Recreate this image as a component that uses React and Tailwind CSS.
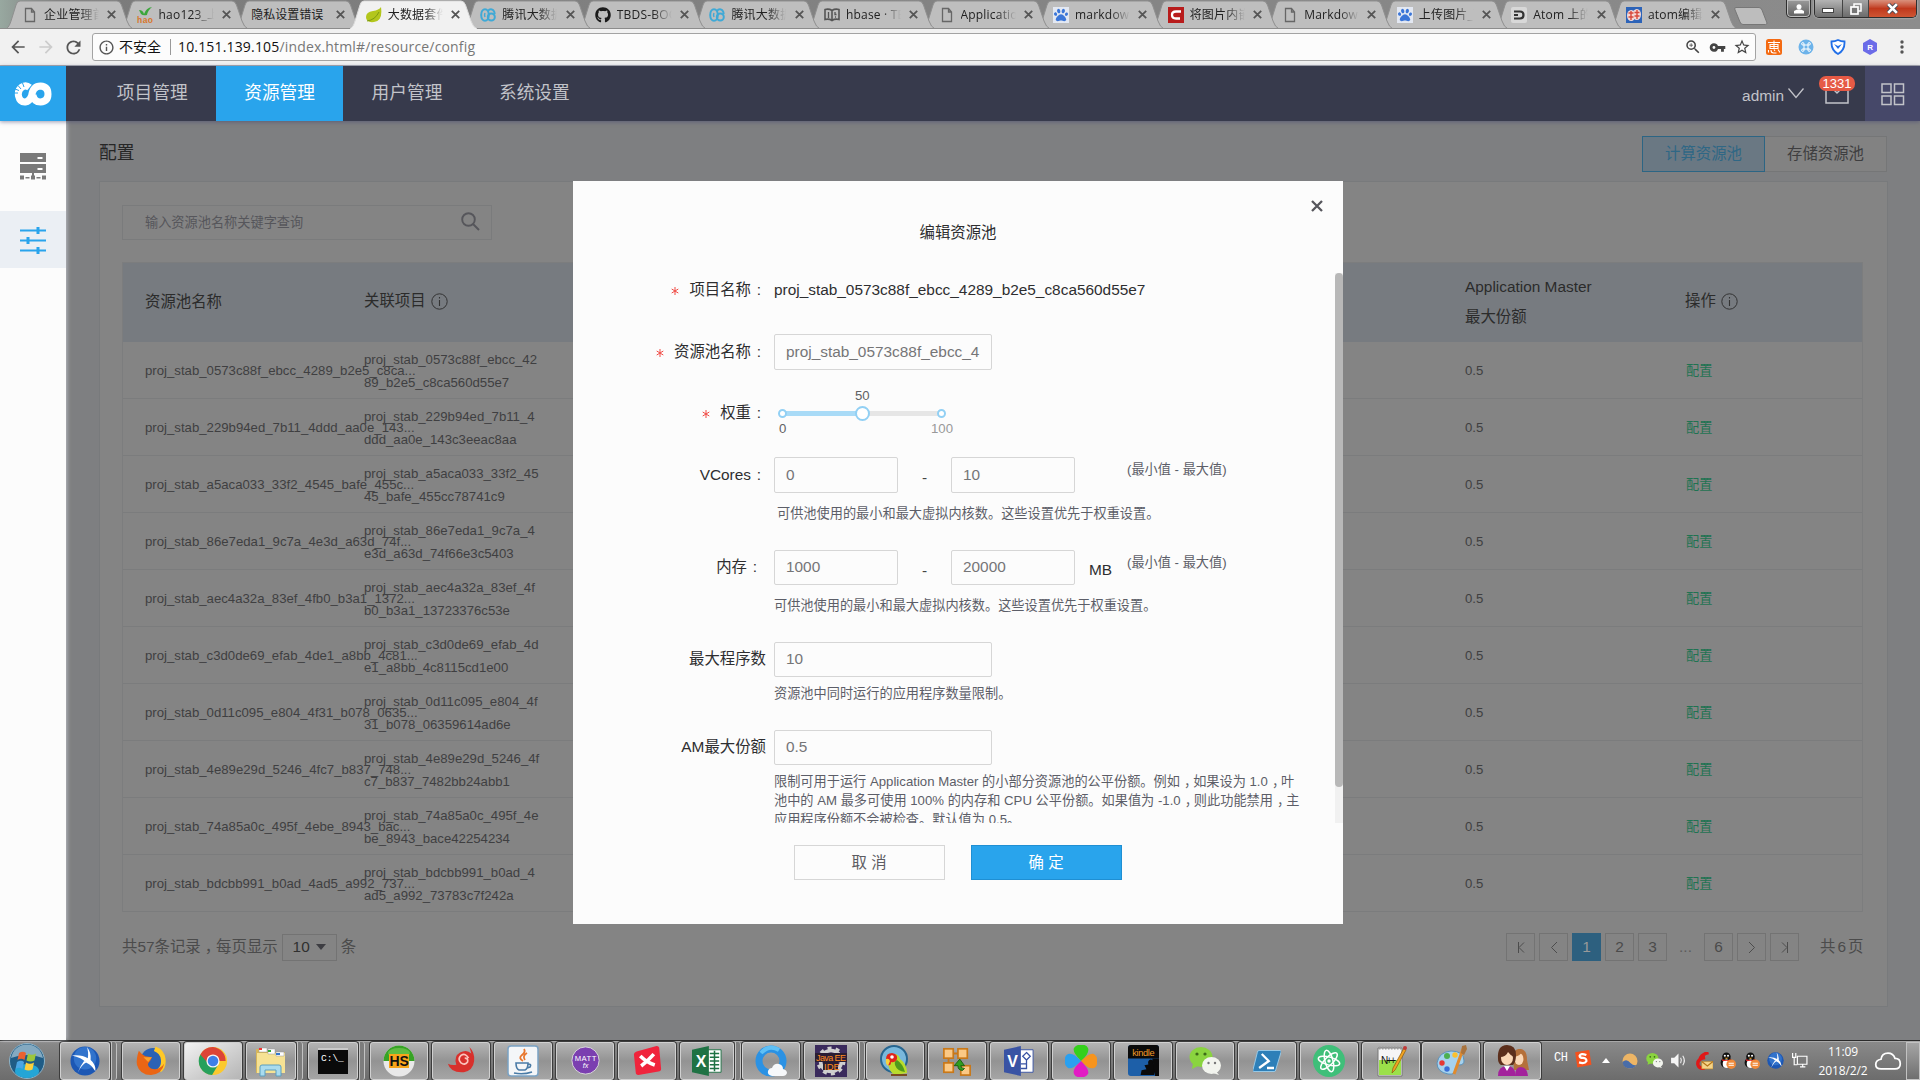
import React from "react";
import { FaGithub, FaPaw } from "react-icons/fa";
import { MdVpnKey, MdStarBorder, MdRefresh, MdArrowBack, MdArrowForward, MdZoomIn, MdInfoOutline } from "react-icons/md";

/* ---------- browser chrome ---------- */

const PageIcon = () => (
  <svg viewBox="0 0 16 16" className="size-4">
    <path d="M3.5 1.5h6l3 3.5v9.500h-9z M9.500 1.500V5h3" fill="none" stroke="#666" strokeWidth="1.3" />
  </svg>
);
const HaoIcon = () => (
  <svg viewBox="0 0 16 16" className="size-4">
    <path d="M2 3q4 0 5 4 2-6 8-7-4 3-5 8-4 1-6-1-1-2-2-4z" fill="#3aa63a" />
    <text x="0" y="15.500" fontSize="8.500" fontWeight="700" fontFamily="Liberation Sans" fill="#d9772b" textLength="16">hao</text>
  </svg>
);
const LeafIcon = () => (
  <svg viewBox="0 0 16 16" className="size-4">
    <path d="M15 0q2 14-7 15Q0 16 0 10q0-5 7-6 6-1 8-4z" fill="#b3c61c" />
    <path d="M1 14Q9 13 13 5" fill="none" stroke="#7d9a10" strokeWidth="1" />
  </svg>
);
const TencentIcon = () => (
  <svg viewBox="0 0 16 16" className="size-4">
    <ellipse cx="5" cy="8" rx="3.800" ry="5.800" fill="none" stroke="#3fa9d6" strokeWidth="2" />
    <circle cx="11.300" cy="10" r="3.500" fill="none" stroke="#3fa9d6" strokeWidth="2" />
    <path d="M8 4q2-3 5-1 2 2 1.500 4" fill="none" stroke="#3fa9d6" strokeWidth="2" />
    <path d="M5 6q-1 2 0 4" fill="none" stroke="#3fa9d6" strokeWidth="1.500" />
  </svg>
);
const BookIcon = () => (
  <svg viewBox="0 0 16 16" className="size-4">
    <path d="M1 2.500q4-1 7 1 3-2 7-1v10q-4-1-7 1-3-2-7-1zM8 3.500v10" fill="none" stroke="#555" strokeWidth="1.600" />
    <path d="M4.500 5v6M11 5v2.500h1.500M11 10h1" fill="none" stroke="#555" strokeWidth="1.300" />
  </svg>
);
const BaiduIcon = () => (
  <div className="flex size-4 items-center justify-center bg-[#e3e8f2]">
    <FaPaw className="size-[14px] text-[#3b76d8]" />
  </div>
);
const CIcon = () => (
  <svg viewBox="0 0 16 16" className="size-4">
    <rect width="16" height="16" fill="#b81c1c" />
    <path d="M13 4.500H8q-4 0-4 3.500t4 3.500h4" fill="none" stroke="#fff" strokeWidth="2.300" />
  </svg>
);
const DIcon = () => (
  <svg viewBox="0 0 16 16" className="size-4">
    <rect width="16" height="16" rx="2" fill="#d8d8d8" />
    <path d="M3 4.500h6q3.500 0 3.500 3.500t-3.500 3.500H3M3 8h4" fill="none" stroke="#333" strokeWidth="2.200" />
  </svg>
);
const JjIcon = () => (
  <svg viewBox="0 0 16 16" className="size-4">
    <rect width="16" height="16" fill="#2c63b8" />
    <ellipse cx="5.200" cy="8.500" rx="4.200" ry="5.500" fill="#f4d9d6" />
    <ellipse cx="10.800" cy="7.500" rx="4.200" ry="5.500" fill="#f4d9d6" />
    <path d="M5 13V4M2.500 6h5M2.500 10h5M11 12V3M8.500 5.500h5M8.500 9h5" stroke="#d8483c" strokeWidth="1.400" />
  </svg>
);

const tabs = [
  { icon: PageIcon, text: "企业管理首页" },
  { icon: HaoIcon, text: "hao123_上网" },
  { icon: null, text: "隐私设置错误" },
  { icon: LeafIcon, text: "大数据套件", active: true },
  { icon: TencentIcon, text: "腾讯大数据" },
  { icon: () => <FaGithub className="size-4 text-[#1b1b1b]" />, text: "TBDS-BOOK" },
  { icon: TencentIcon, text: "腾讯大数据" },
  { icon: BookIcon, text: "hbase · TBDS" },
  { icon: PageIcon, text: "Application" },
  { icon: BaiduIcon, text: "markdown" },
  { icon: CIcon, text: "将图片内嵌" },
  { icon: PageIcon, text: "Markdown" },
  { icon: BaiduIcon, text: "上传图片_百" },
  { icon: DIcon, text: "Atom 上的" },
  { icon: JjIcon, text: "atom编辑器" },
];

function Tab({ tab, z }) {
  const Icon = tab.icon;
  return (
    <div className="relative h-[29px] w-[114.57px] shrink-0" style={{ zIndex: z }}>
      <svg className="absolute left-0 top-0 h-[29px] w-[127px]" viewBox="0 0 127 29">
        <path d="M0 29 C3 27 4 24 5 21 L10 5 Q11 1 14 1 H111 Q114 1 115.500 5 L121 21 Q123 27 127 29Z" fill={tab.active ? "#f1f1f1" : "#bebebe"} stroke={tab.active ? "#dcdcdc" : "#8f8f8f"} />
        {!tab.active && <path d="M0 28.500H127" stroke="#8c8c8c" />}
        {tab.active && <path d="M1 29H126" stroke="#f1f1f1" strokeWidth="2" />}
      </svg>
      <div className="relative flex h-[29px] items-center pl-4 font-['Open_Sans','Noto_Sans_CJK_SC',sans-serif] text-[12px] text-[#222]">
        {Icon && <span className="mr-[6px] flex w-4"><Icon /></span>}
        <span className={"h-[18px] overflow-hidden whitespace-nowrap leading-[18px] " + (Icon ? "w-[55px] tracking-[0.200px] [mask-image:linear-gradient(90deg,#000_65%,transparent)]" : "w-[77px]")}>{tab.text}</span>
        <svg viewBox="0 0 9 9" className="ml-[8.300px] size-[9px]"><path d="M.8.800l7.400 7.400M8.200.800L.8 8.200" stroke="#555" strokeWidth="1.800" /></svg>
      </div>
    </div>
  );
}

function WindowButtons() {
  const cell = "flex h-full items-center justify-center";
  return (
    <div className="ml-auto mr-[3px] flex h-[18px] gap-[3px]">
      <div className="flex w-[25px] items-center justify-center rounded-b-[5px] border border-t-0 border-[#2f2f2f] bg-gradient-to-b from-[#9b9b9b] to-[#606060] shadow-[inset_0_0_0_1px_#bdbdbd]">
        <svg viewBox="0 0 10 10" className="size-[10px]"><circle cx="5" cy="2.800" r="2.500" fill="#fff" /><path d="M0 9.500V7q5-3.500 10 0v2.500z" fill="#fff" /></svg>
      </div>
      <div className="flex w-[103px] overflow-hidden rounded-b-[5px] border border-t-0 border-[#2f2f2f] shadow-[0_0_2px_#ddd]">
        <div className={cell + " w-[28px] border-r border-[#444] bg-gradient-to-b from-[#b4b4b4] to-[#707070]"}>
          <span className="mt-1 h-[5px] w-[12px] border border-[#444] bg-white" />
        </div>
        <div className={cell + " w-[27px] border-r border-[#444] bg-gradient-to-b from-[#a5a5a5] to-[#6c6c6c]"}>
          <svg viewBox="0 0 12 12" className="size-3"><rect x="4" y="1" width="7" height="7" fill="none" stroke="#fff" strokeWidth="1.500" /><rect x="1" y="4" width="7" height="7" fill="#777" stroke="#fff" strokeWidth="1.700" /></svg>
        </div>
        <div className={cell + " w-[47px] bg-gradient-to-b from-[#d9907c] via-[#c0381c] to-[#cf5533]"}>
          <svg viewBox="0 0 12 10" className="h-[11px] w-[13px]"><path d="M2 1l8 8M10 1L2 9" stroke="#4a4a55" strokeWidth="4" /><path d="M2 1l8 8M10 1L2 9" stroke="#fff" strokeWidth="2.500" /></svg>
        </div>
      </div>
    </div>
  );
}

function Browser() {
  return (
    <>
      <div className="flex h-[29px] bg-gradient-to-r from-[#98a8a0] via-[#7b7b7b] via-3% to-[#8c8c8c] pl-[6px] shadow-[inset_0_-1px_#8c8c8c]">
        {tabs.map((t, i) => <Tab key={i} tab={t} z={t.active ? 30 : 20 - i} />)}
        <svg viewBox="0 0 34 18" className="ml-[10px] mt-[7px] h-[18px] w-[34px]"><path d="M2 .5H25Q27 .5 28 3l5 13q0 1.500-1.500 1.500H9Q7 17.500 6 15L.7 2Q.5.500 2 .5z" fill="#bdbdbd" stroke="#777" /></svg>
        <WindowButtons />
      </div>
      <div className="flex h-[37px] items-center border-b border-[#a8aab0] bg-[#f1f1f1] text-[#555]">
        <div className="flex w-[92px] shrink-0 items-center">
          <MdArrowBack className="ml-[8px] size-[20px]" />
          <MdArrowForward className="ml-[8px] size-[20px] text-[#ccc]" />
          <MdRefresh className="ml-[7px] size-[21px]" />
        </div>
        <div className="flex h-[28px] w-[1664px] items-center rounded-[3px] border border-[#a3a3a3] bg-[#fcfcfc] font-['Open_Sans','Noto_Sans_CJK_SC',sans-serif] text-[14px] text-[#111]">
          <MdInfoOutline className="ml-[5px] size-[17px] text-[#555]" />
          <span className="-mt-px ml-[4px] w-[43px] whitespace-nowrap">不安全</span>
          <span className="ml-[8px] mr-[7px] h-4 w-px bg-[#999]" />
          <span className="-mt-px tracking-[0.165px]">10.151.139.105<span className="text-[#777]">/index.html#/resource/config</span></span>
          <div className="ml-auto mr-[4px] flex items-center gap-[7px] text-[#444]">
            <MdZoomIn className="size-[18px]" />
            <MdVpnKey className="size-[17px]" />
            <MdStarBorder className="size-[18px]" />
          </div>
        </div>
        <div className="ml-[10px] flex items-center gap-4">
          <svg viewBox="0 0 16 16" className="size-4"><rect width="16" height="16" rx="2.500" fill="#f46a12" /><path d="M2 3.500h12M4 5.500h8v4H4zM4 7.500h8M8 1.500v8M2.500 11v2.500M5 11q0 3 2.500 3h3M8 10.500l1 1.500M12 10.500l2 3" fill="none" stroke="#fff" strokeWidth="1.100" /></svg>
          <svg viewBox="0 0 16 16" className="size-4"><circle cx="8" cy="8" r="7.500" fill="#6db3ea" /><path d="M6 6h4v4H6zM6 6H5a1.200 1.200 0 1 1 1-1zM10 6V5a1.200 1.200 0 1 1 1 1zM6 10v1a1.200 1.200 0 1 1-1-1zM10 10h1a1.200 1.200 0 1 1-1 1z" fill="none" stroke="#fff" /></svg>
          <svg viewBox="0 0 16 16" className="size-4"><path d="M8 1q3 1.500 6.500 1.500Q15 11 8 15 1 11 1.500 2.500 5 2.500 8 1z" fill="#fff" stroke="#2270e8" strokeWidth="1.800" /><path d="M4 5l4 5 4-5-4 2z" fill="#2270e8" /></svg>
          <svg viewBox="0 0 16 16" className="size-4"><path d="M8 0l7 4v8l-7 4-7-4V4z" fill="#6b6be8" /><text x="5.200" y="11" fontSize="8" fontWeight="700" fill="#fff" fontFamily="Liberation Sans">R</text></svg>
          <svg viewBox="0 0 16 16" className="size-4"><g fill="#555"><circle cx="8" cy="3" r="1.700" /><circle cx="8" cy="8" r="1.700" /><circle cx="8" cy="13" r="1.700" /></g></svg>
        </div>
      </div>
    </>
  );
}

/* ---------- application ---------- */

function Header() {
  const items = ["项目管理", "资源管理", "用户管理", "系统设置"];
  return (
    <header className="relative z-20 flex h-[55px] bg-[#373a4c] text-[#c2c3c9] shadow-[0_1px_4px_rgba(60,62,110,0.5)]">
      <div className="flex w-[66px] items-center justify-center bg-[#29a4ec]">
        <svg viewBox="0 0 38 24" className="h-6 w-[38px]">
          <path d="M15.500 5.500Q12 2.500 8 5 3.500 8 4.500 14q1.500 6.500 7 6 4-.5 6-6Q19 4 26.500 4 34 4.500 34 12t-7.500 8Q20 20 19 13" fill="none" stroke="#fff" strokeWidth="7" />
          <path d="M1 7l4 1.500M4 3.500L7 7M8.500 1L10 5M0 11h4" stroke="#29a4ec" strokeWidth="1" />
        </svg>
      </div>
      <nav className="ml-[22.500px] flex text-[17.700px] leading-[55px]">
        {items.map((t, i) => (
          <div key={t} className={"w-[127.400px] text-center " + (i === 1 ? "bg-[#29a4ec] text-white" : "")}>{t}</div>
        ))}
      </nav>
      <div className="ml-auto flex items-center">
        <span className="mt-[4px] text-[15.400px]">admin</span>
        <svg viewBox="0 0 16 11" className="ml-[4px] h-[11px] w-4"><path d="M.5.500L8 9.500 15.500.5" fill="none" stroke="#c2c3c9" strokeWidth="1.300" /></svg>
        <div className="relative ml-[21px] mr-[16px] mt-[2px]">
          <svg viewBox="0 0 24 19" className="h-[19px] w-6"><path d="M1 1h22v17H1zM6 2l6 6 6-6" fill="none" stroke="#c2c3c9" strokeWidth="1.500" /></svg>
          <span className="absolute -left-[6px] -top-[9px] h-[15px] w-9 rounded-[7px] bg-[#e65a45] text-center text-[13px] leading-[15px] text-white">1331</span>
        </div>
        <div className="flex h-full w-[55px] items-center justify-center bg-[#464869]">
          <svg viewBox="0 0 24 23" className="mt-px h-[23px] w-6"><g fill="none" stroke="#c2c3c9" strokeWidth="1.500"><rect x="1" y="1" width="9" height="8.500" /><rect x="13.500" y="1" width="9" height="8.500" /><rect x="1" y="13" width="9" height="8.500" /><rect x="13.500" y="13" width="9" height="8.500" /></g></svg>
        </div>
      </div>
    </header>
  );
}

function Sidebar() {
  return (
    <aside className="relative z-10 w-[66px] shrink-0 bg-[#fcfcfc] pt-[17px] shadow-[1px_0_4px_rgba(235,240,250,0.55)]">
      <div className="flex h-[57px] items-center justify-center">
        <svg viewBox="0 0 26 27" className="h-[27px] w-[26px]">
          <path d="M0 0h26v9H0zM0 11h26v9H0zM12 20h2v3h-2zM0 22.500h4v4H0zM5.500 24h4v1.500h-4zM11 22.500h4v4h-4zM16.500 24h4v1.500h-4zM22 22.500h4v4h-4z" fill="#7a7a7a" />
          <path d="M17.500 4h5v2h-5zM17.500 15h5v2h-5z" fill="#fff" />
        </svg>
      </div>
      <div className="mt-[16px] flex h-[57px] items-center justify-center bg-[#ebeff4] pt-[2px]">
        <svg viewBox="0 0 26 27" className="h-[27px] w-[26px]"><path d="M0 2.500h26v2H0zM16.500 0h3v7h-3zM0 12.500h26v2H0zM6.500 10h3v7h-3zM0 22.500h26v2H0zM16.500 20h3v7h-3z" fill="#29a4ec" /></svg>
      </div>
    </aside>
  );
}

const rows = [
  ["proj_stab_0573c88f_ebcc_4289_b2e5_c8ca...", "proj_stab_0573c88f_ebcc_42", "89_b2e5_c8ca560d55e7"],
  ["proj_stab_229b94ed_7b11_4ddd_aa0e_143...", "proj_stab_229b94ed_7b11_4", "ddd_aa0e_143c3eeac8aa"],
  ["proj_stab_a5aca033_33f2_4545_bafe_455c...", "proj_stab_a5aca033_33f2_45", "45_bafe_455cc78741c9"],
  ["proj_stab_86e7eda1_9c7a_4e3d_a63d_74f...", "proj_stab_86e7eda1_9c7a_4", "e3d_a63d_74f66e3c5403"],
  ["proj_stab_aec4a32a_83ef_4fb0_b3a1_1372...", "proj_stab_aec4a32a_83ef_4f", "b0_b3a1_13723376c53e"],
  ["proj_stab_c3d0de69_efab_4de1_a8bb_4c81...", "proj_stab_c3d0de69_efab_4d", "e1_a8bb_4c8115cd1e00"],
  ["proj_stab_0d11c095_e804_4f31_b078_0635...", "proj_stab_0d11c095_e804_4f", "31_b078_06359614ad6e"],
  ["proj_stab_4e89e29d_5246_4fc7_b837_748...", "proj_stab_4e89e29d_5246_4f", "c7_b837_7482bb24abb1"],
  ["proj_stab_74a85a0c_495f_4ebe_8943_bac...", "proj_stab_74a85a0c_495f_4e", "be_8943_bace42254234"],
  ["proj_stab_bdcbb991_b0ad_4ad5_a992_737...", "proj_stab_bdcbb991_b0ad_4", "ad5_a992_73783c7f242a"],
];

const Info = () => (
  <svg viewBox="0 0 17 17" className="ml-[5px] mt-[3px] size-[17px]"><circle cx="8.500" cy="8.500" r="7.700" fill="none" stroke="#333" strokeWidth="1" /><path d="M8.500 4v1.500M8.500 7v6" stroke="#333" strokeWidth="1.100" /></svg>
);

function Pager() {
  const box = "flex h-[28px] w-[29px] items-center justify-center border border-[#737373]";
  const arrow = (d) => <svg viewBox="0 0 8 11" className="h-[11px] w-2"><path d={d} fill="none" stroke="#4c4c4c" /></svg>;
  return (
    <div className="ml-auto flex items-center gap-[4px] text-[15.400px] text-[#4b4b4b]">
      <div className={box}>{arrow("M1.500 0v11M7 .5L2 5.500 7 10.500")}</div>
      <div className={box}>{arrow("M7 0L1.500 5.500 7 11")}</div>
      <div className="flex h-[28px] w-[29px] items-center justify-center bg-[#2d607f] text-[#999]">1</div>
      <div className={box}>2</div>
      <div className={box}>3</div>
      <span className="w-[29px] text-center text-[#5c5c5c]">...</span>
      <div className={box}>6</div>
      <div className={box}>{arrow("M1 0l5.500 5.500L1 11")}</div>
      <div className={box}>{arrow("M6.500 0v11M1 .5l5 5-5 5")}</div>
      <span className="ml-[17px] w-[45px] whitespace-nowrap leading-[24px] tracking-[2px]">共6页</span>
    </div>
  );
}

function ResourcePanel() {
  return (
    <section className="h-[826px] w-[1789px] border border-[#787a7c] bg-[#848484] px-[22px] pt-[23px]">
      <div className="flex h-[35px] w-[370px] items-center justify-between border border-[#7a7b7c] pl-[22px] pr-[11px] text-[13.200px] text-[#56565b]">
        <span>输入资源池名称关键字查询</span>
        <svg viewBox="0 0 19 19" className="-mt-[2px] size-[19px]"><circle cx="7.500" cy="7.500" r="6.300" fill="none" stroke="#56565b" strokeWidth="1.900" /><path d="M12 12l6 6" stroke="#56565b" strokeWidth="2" /></svg>
      </div>
      <div className="mt-[22px] w-[1741px] border-x border-t border-[#7c7d7e]">
        <div className="flex h-[79px] items-center bg-[#777b80] pl-[22px] text-[15.400px] text-[#2b2b2b]">
          <div className="w-[219px] pb-px">资源池名称</div>
          <div className="flex w-[1101px] items-center pb-[4px]">关联项目<Info /></div>
          <div className="w-[220px] pb-px leading-[30px]">Application Master<br />最大份额</div>
          <div className="flex items-center pb-[4px]">操作<Info /></div>
        </div>
        {rows.map(([name, a, b]) => (
          <div key={name} className="flex h-[57px] items-center border-b border-[#7b7c7d] pl-[22px] pt-[2px] text-[13.200px] text-[#3f3f41]">
            <div className="w-[219px] whitespace-nowrap">{name}</div>
            <div className="w-[1101px] leading-[23px]">{a}<br />{b}</div>
            <div className="w-[220px]">0.5</div>
            <div className="ml-px text-[#1f7352]">配置</div>
          </div>
        ))}
      </div>
      <div className="mt-[21px] flex h-[28px] items-center text-[15.400px] text-[#4b4b4b]">
        <span className="leading-[24px]">共57条记录<Comma />每页显示</span>
        <div className="ml-[4px] mr-[4px] flex h-[27px] w-[55px] items-center justify-center gap-[6px] border border-[#737373] text-[#303030]">
          10<span className="border-x-[5px] border-t-[6px] border-x-transparent border-t-[#3d3d42]" />
        </div>
        <span className="leading-[24px]">条</span>
        <Pager />
      </div>
    </section>
  );
}

/* ---------- edit dialog ---------- */

function Row({ label, required, colon, className, children, pad = "pr-[8px]", up }) {
  return (
    <div className={"flex items-center " + className}>
      <div className={"flex w-[201px] shrink-0 items-center justify-end whitespace-nowrap leading-[20px] text-[#2e2e30] " + pad + (up ? " pb-[2px]" : "")}>
        {required && (
          <svg viewBox="0 0 8 8" className="mr-[10px] mt-[2px] size-[8px]"><path d="M4 0v8M.7 2l6.600 4M7.300 2L.7 6" stroke="#f04a44" strokeWidth="1" /></svg>
        )}
        {label}
        {colon && <span className="w-[15px] pl-px text-center">:</span>}
      </div>
      {children}
    </div>
  );
}
const Field = ({ value, wide, short }) => (
  <div className={"flex shrink-0 items-center overflow-hidden whitespace-nowrap rounded-[2px] border border-[#d6d6d6] px-[11px] text-[15.400px] text-[#757577] " + (wide ? "w-[218px] " : "w-[124px] ") + (short ? "h-[35px] pb-[2px]" : "h-[36px]")}>
    {value}
  </div>
);
const Dash = () => <span className="w-[53px] pt-[6px] text-center text-[#444]">-</span>;
const Comma = () => <span className="relative left-[4px]">，</span>;

function Slider() {
  return (
    <div className="relative ml-[9px] flex h-[44px] w-[160px] items-center text-[13.200px] text-[#616163]">
      <div className="flex h-[5px] w-full bg-[#e6e6e6]"><div className="w-1/2 bg-[#a9dbf7]" /></div>
      <span className="absolute -left-[5px] top-[18px] h-[9px] w-[9px] rounded-full border-2 border-[#92d0f4] bg-white" />
      <span className="absolute left-[154px] top-[18px] h-[9px] w-[9px] rounded-full border-2 border-[#92d0f4] bg-white" />
      <span className="absolute left-[72px] top-[15px] size-[15px] rounded-full border-2 border-[#92d0f4] bg-white" />
      <span className="absolute left-[72px] -top-[3px] leading-[15px]">50</span>
      <span className="absolute -left-[4px] top-[30px] leading-[15px]">0</span>
      <span className="absolute left-[148px] top-[30px] leading-[15px] text-[#999]">100</span>
    </div>
  );
}

function EditDialog() {
  const help = "whitespace-nowrap text-[13.200px] leading-[19px] text-[#5c5e68]";
  return (
    <div className="absolute left-[507px] top-[60px] z-30 flex h-[743px] w-[770px] flex-col bg-[#fcfcfc] text-[15.400px] text-[#2e2e30]">
      <svg viewBox="0 0 12 12" className="absolute right-[20px] top-[19px] size-3"><path d="M1 1l10 10M11 1L1 11" stroke="#56565c" strokeWidth="2.300" /></svg>
      <h2 className="mb-[30px] pt-[42px] text-center leading-[20px]">编辑资源池</h2>
      <div className="flex h-[550px]">
        <div className="h-full w-[762px] overflow-hidden">
          <Row label="项目名称" required colon className="h-[34px]">proj_stab_0573c88f_ebcc_4289_b2e5_c8ca560d55e7</Row>
          <Row label="资源池名称" required colon className="mt-[27px]"><Field wide value="proj_stab_0573c88f_ebcc_4" /></Row>
          <Row label="权重" required colon className="mt-[21px]"><Slider /></Row>
          <Row label="VCores" colon className="mt-[22px]">
            <Field value="0" /><Dash /><Field value="10" />
            <span className={help + " ml-[52px] -mt-[11px]"}>(最小值 - 最大值)</span>
          </Row>
          <p className={help + " ml-[204px] mt-[11px]"}>可供池使用的最小和最大虚拟内核数。这些设置优先于权重设置。</p>
          <Row label="内存" colon up pad="pr-[12px]" className="mt-[27px]">
            <Field short value="1000" /><Dash /><Field short value="20000" />
            <span className="ml-[14px] mt-[5px] w-[23px]">MB</span>
            <span className={help + " ml-[15px] -mt-[11px]"}>(最小值 - 最大值)</span>
          </Row>
          <p className={help + " ml-[201px] mt-[11px]"}>可供池使用的最小和最大虚拟内核数。这些设置优先于权重设置。</p>
          <Row label="最大程序数" up className="mt-[27px]"><Field wide short value="10" /></Row>
          <p className={help + " ml-[201px] mt-[7px]"}>资源池中同时运行的应用程序数量限制。</p>
          <Row label="AM最大份额" up className="mt-[27px]"><Field wide short value="0.5" /></Row>
          <p className={help + " ml-[201px] mt-[7px]"}>
            限制可用于运行 Application Master 的小部分资源池的公平份额。例如<Comma />如果设为 1.0<Comma />叶<br />
            池中的 AM 最多可使用 100% 的内存和 CPU 公平份额。如果值为 -1.0<Comma />则此功能禁用<Comma />主<br />
            应用程序份额不会被检查。默认值为 0.5。
          </p>
        </div>
        <div className="h-full w-2 bg-[#f1f1f1]"><div className="h-[514px] rounded-[4px] bg-[#b8b8b8]" /></div>
      </div>
      <div className="mt-[22px] flex justify-center gap-[26px] pr-[1px] leading-[34px]">
        <div className="h-[35px] w-[151px] border border-[#d6d6d6] text-center text-[#5c5c62]">取 消</div>
        <div className="h-[35px] w-[151px] border border-[#1f8fd3] bg-[#29a4ec] text-center text-white">确 定</div>
      </div>
    </div>
  );
}

/* ---------- taskbar ---------- */

const Svg = ({ children, s = "size-[30px]" }) => <svg viewBox="0 0 32 32" className={s}>{children}</svg>;
const T = ({ x, y, size, fill, children, ...rest }) => <text x={x} y={y} fontSize={size} fill={fill} fontFamily="Liberation Sans" {...rest}>{children}</text>;

const Bird = ({ s }) => (
  <Svg s={s}>
    <circle cx="16" cy="16" r="15.500" fill="#1c57b4" /><circle cx="16" cy="13" r="12" fill="#3f86dc" opacity=".6" />
    <path d="M2 10q11-1 17 3 1-7-1-12 5 6 4 14 6 5 5 12-4-7-9-9Q12 12 2 10z" fill="#fff" />
    <path d="M18 17Q12 20 8 29q3-8 7-13z" fill="#fff" />
  </Svg>
);
const WeChat = ({ s }) => (
  <Svg s={s}>
    <ellipse cx="12" cy="12" rx="11.500" ry="10" fill="#8ad43f" /><path d="M4 18l-1 6 6-3z" fill="#8ad43f" />
    <ellipse cx="22.500" cy="20.500" rx="9.500" ry="8.500" fill="#f2f4ee" /><path d="M27 26l3 4-6-2z" fill="#f2f4ee" />
    <g fill="#3d6b18"><circle cx="8" cy="9" r="1.600" /><circle cx="16" cy="9" r="1.600" /></g><g fill="#777"><circle cx="19.500" cy="18" r="1.200" /><circle cx="26" cy="18" r="1.200" /></g>
  </Svg>
);

const apps = [
  { w: "w-[50px]", m: "ml-[6px]", stack: true, icon: <Bird /> },
  { w: "w-[58px]", m: "ml-[12px]", icon: <Svg><circle cx="18" cy="15" r="13" fill="#2a62b5" /><path d="M20 3q8 3 9 11t-4 12" fill="none" stroke="#ffc928" strokeWidth="5" /><path d="M3 5Q0 14 1 20q3 11 15 11 12-1 14-12-6 8-14 5-6-4-1-8l2-4-7-1q-4-2-7-6z" fill="#ea6515" /><path d="M8 12l9 0-4 5z" fill="#f9a12b" /></Svg> },
  { w: "w-[58px]", active: true, icon: <Svg><circle cx="16" cy="16" r="15" fill="#fbc92f" /><path d="M16 1A15 15 0 0 0 2.500 9l7 12L16 16h13.500A15 15 0 0 0 16 1z" fill="#dc4437" /><path d="M2.500 9A15 15 0 0 0 15 31l6.500-11-6-1-6-2z" fill="#27a05c" /><circle cx="16" cy="16" r="7" fill="#f5f5f5" /><circle cx="16" cy="16" r="5.600" fill="#3e7ee8" /></Svg> },
  { w: "w-[50px]", stack: true, icon: <Svg s="size-[32px]"><path d="M1 4h10l2 3h17v21H1z" fill="#d6b65a" /><path d="M2 8h28v20H2z" fill="#f6e294" /><path d="M4 3h8v4H4zM13 4h7v5h-7zM21 7h8v4h-8z" fill="#fff" stroke="#9a9a9a" strokeWidth=".5" /><path d="M4 3h3v2H4z" fill="#e33" /><path d="M13 5h3v2h-3z" fill="#3a3" /><path d="M21 8h4v2h-4z" fill="#37c" /><path d="M5 31V22q0-2 2-2h17q2 0 2 2v9h-5v-6H10v6z" fill="#a9dbee" stroke="#5a9fc0" /></Svg> },
  { w: "w-[50px]", m: "ml-[12px]", stack: true, icon: <svg viewBox="0 0 30 26" className="h-[26px] w-[30px]"><rect width="30" height="26" fill="#0a0a0a" /><path d="M0 0h30v2H0z" fill="#c9c9c9" /><text x="3" y="13" fontSize="9.500" fill="#fff" fontFamily="Liberation Mono">C:\_</text></svg> },
  { w: "w-[58px]", m: "ml-[12px]", icon: <Svg s="size-[32px]"><circle cx="16" cy="16" r="15.500" fill="#e9e9e9" /><path d="M.5 16a15.500 15.500 0 0 1 31 0z" fill="#37a325" /><ellipse cx="16" cy="8" rx="11" ry="5" fill="#8bd65f" opacity=".5" /><rect x="6" y="9" width="20" height="14" fill="#f9a51a" /><T x="6.500" y="21" size="14" fill="#111" fontWeight="700">HS</T></Svg> },
  { w: "w-[58px]", icon: <Svg><path d="M25 1q6 6 5 15-1 10-11 12Q5 29 2 19q4 2 9 1-3-9 4-13t12 1q-1-4-2-7z" fill="#d8302c" /><path d="M24 13q-3-6-8-3-4 4 0 8 4 3 7-1 1-4-3-4" fill="none" stroke="#fbc4bd" strokeWidth="1.800" /></Svg> },
  { w: "w-[58px]", icon: <Svg s="size-[32px]"><rect x="1" y="1" width="30" height="30" rx="3" fill="#f4f6f8" stroke="#7aa2c4" strokeWidth="1.500" /><path d="M17 4q2 3-2 6t1 6M20 8q-5 3-2 7" fill="none" stroke="#e8762c" strokeWidth="1.800" /><path d="M9 18h12q0 6-3 7h-6q-3-1-3-7zM21 19q4 0 2 3l-3 1M7 28q9 2 18-1" fill="none" stroke="#4a7ba6" strokeWidth="1.600" /></Svg> },
  { w: "w-[58px]", icon: <Svg s="size-[29px]"><circle cx="16" cy="16" r="15" fill="#7b3fb0" stroke="#ddd" /><T x="4" y="16" size="8.500" fill="#fff" textLength="24">MATT</T><T x="13" y="24" size="8" fill="#fff" fontStyle="italic">fx</T></Svg> },
  { w: "w-[58px]", icon: <Svg s="size-[29px]"><path d="M4 6l22-6q3 0 3 3l2 22q0 3-3 3L6 32q-3 0-3-3L1 9q0-2 3-3z" fill="#f0243c" /><path d="M8 11q7 7 16 10M23 9q-7 8-14 13" stroke="#fff" strokeWidth="4" fill="none" /></Svg> },
  { w: "w-[54px]", stack: true, icon: <Svg><path d="M15 4h16v24H15z" fill="#fff" stroke="#1f7244" /><path d="M19 8h10M19 12h10M19 16h10M19 20h10M19 24h10M24 5v22" stroke="#1f7244" strokeWidth="1.600" /><path d="M0 4L18 0v32L0 28z" fill="#1f7244" /><T x="4" y="22" size="17" fill="#fff" fontWeight="700">X</T></Svg> },
  { w: "w-[58px]", m: "ml-[8px]", icon: <Svg s="size-[32px]"><circle cx="16" cy="16" r="12" fill="none" stroke="#2b92e4" strokeWidth="7" /><path d="M6 8q8-9 18-3" fill="none" stroke="#5fc0f5" strokeWidth="4" /><path d="M17 31q-5-1-4-5 1-3 4-3 2-5 7-4 4 1 4 5 4 1 4 4-1 3-4 3z" fill="#f6f8fa" /></Svg> },
  { w: "w-[54px]", stack: true, icon: <Svg s="size-[32px]"><rect width="32" height="32" fill="#3a2a5c" /><circle cx="16" cy="16" r="10.500" fill="none" stroke="#cfcfcf" strokeWidth="3.500" /><circle cx="16" cy="16" r="13" fill="none" stroke="#cfcfcf" strokeWidth="3" strokeDasharray="4 4.200" /><path d="M0 8h32v9H0zM8 17h15v8H8z" fill="#2a1d33" /><T x="1" y="15.500" size="9" fill="#ff8a1e" textLength="30">Java EE</T><T x="9" y="24.500" size="9.500" fill="#ff8a1e">IDE</T></Svg> },
  { w: "w-[58px]", m: "ml-[8px]", icon: <Svg s="size-[32px]"><circle cx="15" cy="14" r="13" fill="#79b8dc" stroke="#27658f" strokeWidth="2" /><path d="M9 18q-1-9 6-9 5 0 6 5 7 5 7 14l-6 1-6 1q-6-3-7-12z" fill="#b9dc2c" /><path d="M18 15q6 4 8 12-8-1-10-7-1-4 2-5z" fill="#4f9a1c" /><path d="M7 14q0-6 6-6 6 1 5 6-2 4-6 3 0 4-3 3-2-3-2-6z" fill="#e0261c" /><path d="M7 14q3-1 4 2l-2 5q-3-2-2-7z" fill="#f7d23a" /><circle cx="13" cy="12" r="1.800" fill="#fff" /><path d="M12 30h16" stroke="#7a4b22" strokeWidth="2" /></Svg> },
  { w: "w-[58px]", icon: <Svg><g fill="#fbc985" stroke="#c97818" strokeWidth="1.800"><rect x="2" y="3" width="10" height="10" /><rect x="17" y="3" width="10" height="10" /><rect x="2" y="18" width="10" height="10" /><rect x="20" y="21" width="10" height="10" /></g><path d="M12 8h5M7 13v5" stroke="#c97818" strokeWidth="2" /><path d="M22 26q-5 0-5-5h-4l6-7 5 7h-4q0 3 4 3z" fill="#2e9e1e" stroke="#175c0f" /></Svg> },
  { w: "w-[58px]", icon: <Svg><path d="M15 4h16v24H15z" fill="#fff" stroke="#3953a4" /><path d="M24 7l4 4-4 4-4-4zM24 15v4M18 19h6v5h-6" fill="none" stroke="#3953a4" strokeWidth="1.400" /><path d="M0 4L18 0v32L0 28z" fill="#3953a4" /><T x="3.500" y="22" size="17" fill="#fff" fontWeight="700">V</T></Svg> },
  { w: "w-[58px]", icon: <Svg s="size-[32px]"><path d="M16 16Q7 7 9 3q3-4 7-3 5-1 7 3 2 5-7 13z" fill="#35d01c" /><path d="M16 16q9-9 13-7 4 3 3 7 1 5-3 7-5 2-13-7z" fill="#f7941d" /><path d="M16 16q9 9 7 13-3 4-7 3-5 1-7-3-2-5 7-13z" fill="#e21ac4" /><path d="M16 16Q7 25 3 23q-4-3-3-7-1-5 3-7 5-2 13 7z" fill="#2aa0f0" /></Svg> },
  { w: "w-[58px]", icon: <Svg s="size-[31px]"><rect width="32" height="32" rx="3" fill="#1d5fa8" /><path d="M0 3q0-3 3-3h26q3 0 3 3v11H0z" fill="#0a0a0a" /><path d="M13 31l1-5 5-1-2-4 4-1q-1-4 2-5 4 0 3 4 3 3 2 8l-1 4z" fill="#0a0a0a" /><path d="M25 14h7v18h-4z" fill="#0a0a0a" /><T x="4.500" y="11" size="9.500" fill="#f39a28" textLength="23">kindle</T></Svg> },
  { w: "w-[58px]", icon: <WeChat s="size-[32px]" /> },
  { w: "w-[58px]", icon: <Svg s="size-[28px]"><path d="M7 4h24q2 0 1 2l-6 20q0 2-2 2H1q-2 0-1-2L5 6q0-2 2-2z" fill="#2d7fb8" stroke="#9ed0ee" /><path d="M10 8l8 8-11 8M16 24h8" fill="none" stroke="#fff" strokeWidth="2.600" /></Svg> },
  { w: "w-[58px]", icon: <Svg s="size-[32px]"><circle cx="16" cy="16" r="16" fill="#3fbf79" /><g fill="none" stroke="#fff" strokeWidth="1.500"><ellipse cx="16" cy="16" rx="11" ry="4" transform="rotate(15 16 16)" /><ellipse cx="16" cy="16" rx="11" ry="4" transform="rotate(75 16 16)" /><ellipse cx="16" cy="16" rx="11" ry="4" transform="rotate(135 16 16)" /></g><circle cx="16" cy="16" r="1.700" fill="#fff" /></Svg> },
  { w: "w-[58px]", icon: <Svg s="size-[32px]"><path d="M3 3h24v28H3z" fill="#f5f5f5" stroke="#777" /><path d="M4 15h22v15H4z" fill="#9be04a" /><path d="M4 3h22" stroke="#999" strokeWidth="3" strokeDasharray="1.500 1.500" /><T x="6" y="19" size="10" fill="#111" textLength="15">N++</T><path d="M29 3l2 2-11 20-3 3 1-5z" fill="#f0a322" stroke="#8a5a10" strokeWidth=".7" /><circle cx="30" cy="3" r="2" fill="#c03a3a" /></Svg> },
  { w: "w-[58px]", m: "ml-[2px]", icon: <Svg s="size-[32px]"><path d="M2 18Q4 7 16 6q13 0 13 10 0 4-5 4-4 1-3 5-1 5-8 4Q2 27 2 18z" fill="#a6d2ee" stroke="#5b93bd" /><circle cx="12" cy="11" r="3" fill="#4caf50" /><circle cx="20" cy="10" r="2.700" fill="#fbc02d" /><circle cx="7" cy="18" r="2.700" fill="#e53935" /><circle cx="12" cy="24" r="2.700" fill="#3a6fd8" /><path d="M28 4L19 29" stroke="#e08a2c" strokeWidth="3" /><path d="M26 8l1-7 4-1 1 4-3 6z" fill="#a9743f" /></Svg> },
  { w: "w-[57px]", icon: <Svg s="size-[32px]"><path d="M16 13q0-10 8-9 6 1 6 11l2 10H17z" fill="#b5703a" /><ellipse cx="22" cy="14" rx="4.500" ry="6" fill="#fbd7b5" /><path d="M17 12q6-1 8-5 2 4 2 8l1-7-6-4-5 3z" fill="#b5703a" /><path d="M1 14Q0 0 10 0q9 0 9 10 0 7-3 10H4q-3-2-3-6z" fill="#5c2f1c" /><ellipse cx="10" cy="13" rx="6" ry="7" fill="#fbd7b5" /><path d="M3 12q6 0 8-5 3 4 6 5V6l-6-4-7 4z" fill="#5c2f1c" /><path d="M1 31q0-10 9-10t8 10zM18 31q0-9 6-9t7 9z" fill="#a3239c" /><path d="M7 21l3 5 3-5z" fill="#fff" /></Svg> },
];

const Penguin = () => (
  <Svg s="size-[17px]"><ellipse cx="14" cy="9" rx="8" ry="8" fill="#111" /><ellipse cx="14" cy="20" rx="11" ry="10" fill="#111" /><ellipse cx="14" cy="22" rx="7" ry="8" fill="#fff" /><circle cx="11" cy="7" r="2" fill="#fff" /><circle cx="17" cy="7" r="2" fill="#fff" /><path d="M6 13q8 5 16 0v4H6z" fill="#e02020" /><path d="M10 11h8l-4 2z" fill="#f7a51c" /><circle cx="23" cy="23" r="9" fill="#f08a3a" /><path d="M18 21h10M18 25h10" stroke="#fff" strokeWidth="2" /></Svg>
);

function Taskbar() {
  return (
    <footer className="flex h-[40px] items-center border-t border-[#2b2b2b] bg-gradient-to-b from-[#8a8a8a] to-[#6c6c6c] shadow-[inset_0_1px_#a8a8a8]">
      <div className="flex w-[54px] shrink-0 justify-center">
        <svg viewBox="0 0 36 36" className="size-[36px]">
          <circle cx="18" cy="18" r="17.500" fill="#1f5c86" stroke="#8fb4c8" />
          <ellipse cx="18" cy="28" rx="12" ry="7" fill="#25b8ea" opacity=".8" /><path d="M2 15Q5 2 18 1.500 31 2 34 15q-16-6-32 0z" fill="#bcd4e0" opacity=".65" />
          <path d="M10 10q4-2.500 7 0l-1.500 7q-3.500-2.500-7 0z" fill="#ea6230" /><path d="M19 10.500q4 2.500 8 0l-1.500 7q-4 2-8 0z" fill="#9cc73c" />
          <path d="M8 19q4-2.500 7 0l-1.500 7q-3.500-2.500-7 0z" fill="#4aa5e4" /><path d="M17 19.500q4 2.500 8 0l-1.500 7q-4 2-8 0z" fill="#fbcf3c" />
        </svg>
      </div>
      {apps.map((a, i) => (
        <div key={i} className={"relative flex h-[38px] shrink-0 items-center justify-center rounded-[3px] border border-[#d0d0d0] shadow-[0_0_0_1px_#3c3c3c] " + a.w + " " + (a.m || "ml-[4px]") + " " + (a.active ? "bg-gradient-to-br from-[#f2f2f2] to-[#b5b5b5]" : "bg-gradient-to-b from-[#b4b4b4] via-[#939393] to-[#a5a5a5]")}>
          {a.icon}
          {a.stack && <span className="absolute -right-[8px] -top-px h-[38px] w-[6px] rounded-r-[3px] border-x border-[#c2c2c2] bg-[#7d7d7d]" />}
        </div>
      ))}
      <div className="ml-[13px] flex w-[350px] items-center text-white">
        <span className="-mt-[5px] w-[14px] font-['Liberation_Mono',monospace] text-[12px] tracking-[-0.500px]">CH</span>
        <Svg s="ml-[6px] size-[18px] -mt-[4px]"><path d="M2 4l25-4 4 26-25 5z" fill="#f4511e" /><path d="M22 9q-10-4-12 1 0 4 6 4 7 1 6 6-3 5-13 2" fill="none" stroke="#fff" strokeWidth="4" /></Svg>
        <span className="ml-[10px] w-0 border-x-[4px] border-b-[5px] border-x-transparent border-b-white" />
        <Svg s="ml-[12px] size-[16px]"><circle cx="16" cy="16" r="15" fill="#edb565" /><path d="M1 18q8-8 16 2 6 6 12 4-5 7-13 7Q2 30 1 18z" fill="#4a6da8" /></Svg>
        <span className="ml-[8px]"><WeChat s="size-[17px]" /></span>
        <Svg s="ml-[7px] size-[17px]"><path d="M2 11h6l8-8v26l-8-8H2z" fill="#f5f5f5" /><path d="M20 11q3 5 0 10M24 7q6 9 0 18" fill="none" stroke="#f5f5f5" strokeWidth="2" /></Svg>
        <Svg s="ml-[8px] size-[18px]"><path d="M24 1Q12 4 9 12M18 10Q4 12 5 22q2 8 12 7" fill="none" stroke="#e01818" strokeWidth="6" /><path d="M12 17h20v13H12z" fill="#f6d488" stroke="#c78b20" /><path d="M12 17l10 8 10-8" fill="none" stroke="#b5751a" strokeWidth="2" /></Svg>
        <span className="ml-[6px]"><Penguin /></span>
        <span className="ml-[7px]"><Penguin /></span>
        <span className="ml-[7px]"><Bird s="size-[17px]" /></span>
        <Svg s="ml-[7px] size-[17px]"><path d="M12 8h18v15H12zM17 28h10M22 23v5M3 2v8h6V2M6 10v14h6" fill="none" stroke="#fff" strokeWidth="2.200" /></Svg>
        <div className="ml-[7px] w-[56px] text-center font-['Open_Sans',sans-serif] text-[12px] leading-[19px] tracking-[-0.150px]">11:09<br />2018/2/2</div>
        <Svg s="ml-[3px] size-[28px]"><path d="M8 25q-6 0-6-5t6-6q1-7 8-7 6 0 8 6 6 0 6 6t-6 6z" fill="none" stroke="#fff" strokeWidth="2" /></Svg>
      </div>
      <div className="ml-auto h-[38px] w-[14px] shrink-0 border border-[#c2c2c2] bg-gradient-to-b from-[#a5a5a5] to-[#6f6f6f]" />
    </footer>
  );
}

export default function App() {
  return (
    <div className="h-[1080px] w-[1920px] overflow-hidden bg-[#7e7f81] font-['Liberation_Sans','Noto_Sans_CJK_SC',sans-serif]">
      <Browser />
      <Header />
      <div className="relative flex h-[919px]">
        <Sidebar />
        <main className="relative flex-1 pl-[33px]">
          <div className="flex w-[1789px] items-center pb-[9px] pt-[15px]">
            <h1 className="-mt-[2px] text-[17.700px] leading-[30px] text-[#262626]">配置</h1>
            <div className="ml-auto mr-px flex text-[15.400px] leading-[34px]">
              <div className="h-[36px] w-[123px] border border-[#2c6584] bg-[#6a7883] text-center text-[#2f6785]">计算资源池</div>
              <div className="h-[36px] w-[122px] border border-l-0 border-[#757677] bg-[#828282] text-center text-[#3e3e40]">存储资源池</div>
            </div>
          </div>
          <ResourcePanel />
          <EditDialog />
        </main>
      </div>
      <Taskbar />
    </div>
  );
}
